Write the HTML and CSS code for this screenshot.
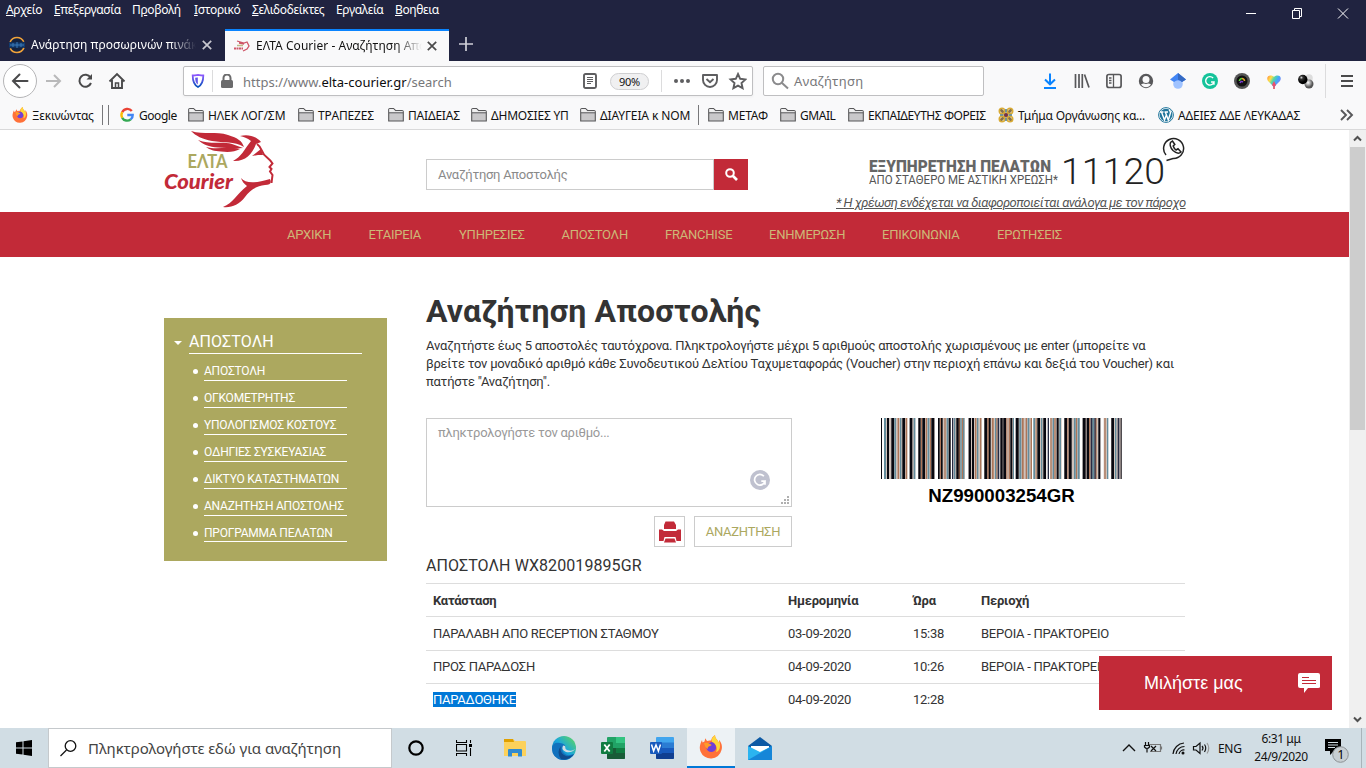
FILE: index.html
```html
<!DOCTYPE html>
<html lang="el">
<head>
<meta charset="utf-8">
<title>ΕΛΤΑ Courier - Αναζήτηση Αποστολής</title>
<link rel="stylesheet" href="styles.css">
</head>
<body>
<svg width="0" height="0" class="defs">
  <defs>
    <symbol id="folder" viewBox="0 0 16 16"><path d="M.7 14V2.7Q.7 1.500 1.900 1.500H5.500L7.500 3.500H14Q15.300 3.500 15.300 4.700V14Z" fill="#c9c8ca" stroke="#58585a" stroke-width="1.100"/><path d="M1.300 4.600V2.100H5.300L7.200 4.200H14.700V5.600H1.300Z" fill="#f0f0f0"/><path d="M1 5.800H15" stroke="#58585a"/></symbol>
    <symbol id="fox" viewBox="0 0 24 24">
      <path d="M3 5C1 9 0 13 1.500 16.500A11 11 0 0 0 22.500 15C23.800 10.500 22 7 20 5C20 6.500 20 7 20 8C18.500 4.500 16 3.500 16 0C13 1.800 12.500 4 12.200 5.600Q10 5.300 8 6L6.300 3.200L5.500 6.500L3.500 7.500Z" fill="#ff7139"/>
      <path d="M16 0C13 2 12 5 13 7C17 9 19 13 17 17C21 16 22 11 20 5L20 8C18.500 4.500 16 3.500 16 0Z" fill="#ffd83a"/>
      <path d="M1.200 11A11 11 0 0 0 22 17A11 11 0 0 1 1.200 11Z" fill="#f52b55"/>
      <path d="M7.500 12C8 9 9 8 11 8L12 7C15 7 17.500 10 17 13.500A5 5 0 0 1 7.500 13.500Z" fill="#7040d8"/>
      <path d="M5 8Q8 7 11 9Q14 10 11 11Q8 12 9 14Q6 13 5 8Z" fill="#ff9b28"/>
    </symbol>
    <symbol id="grammar" viewBox="0 0 20 20"><circle cx="10" cy="10" r="10" fill="currentColor"/><path d="M13.900 6.300A5.300 5.300 0 1 0 15 11.200H11.300M15 11.200V14.700" fill="none" stroke="#fff" stroke-width="1.700"/></symbol>
    <symbol id="cross" viewBox="0 0 10 10"><path d="M.8.8L9.200 9.200M9.200.8L.8 9.200" stroke="currentColor" stroke-width="1.700"/></symbol>
    <linearGradient id="shieldFill" x2="0" y2="1"><stop stop-color="#9059ff"/><stop offset="1" stop-color="#0250bb"/></linearGradient>
    <linearGradient id="edgeFill" x1="0" y1="1" x2="1" y2="0"><stop stop-color="#0c59a4"/><stop offset=".5" stop-color="#1ba7dc"/><stop offset="1" stop-color="#64db54"/></linearGradient>
    <linearGradient id="heartFill" x2="1" y2=".5"><stop stop-color="#ff8a3c"/><stop offset=".3" stop-color="#ffdf4b"/><stop offset=".5" stop-color="#55d8a4"/><stop offset=".75" stop-color="#42a7ff"/><stop offset="1" stop-color="#8c7ff1"/></linearGradient>
    <radialGradient id="blackBall" cx=".35" cy=".3"><stop stop-color="#ddd"/><stop offset=".35" stop-color="#333"/><stop offset="1"/></radialGradient>
    <radialGradient id="grayBall" cx=".4" cy=".35"><stop stop-color="#fff"/><stop offset="1" stop-color="#555"/></radialGradient>
  </defs>
</svg>

<header class="browser">
  <div class="titlebar">
    <nav class="menubar">
      <span class="m1"><u>Α</u>ρχείο</span><span class="m2"><u>Ε</u>πεξεργασία</span><span class="m3">Π<u>ρ</u>οβολή</span><span class="m4"><u>Ι</u>στορικό</span><span class="m5"><u>Σ</u>ελιδοδείκτες</span><span class="m6">Εργαλεία</span><span class="m7"><u>Β</u>οηθεια</span>
    </nav>
    <svg class="winctl" width="110" height="16" fill="none" stroke="#fff"><path d="M6 7.500H16M52.500 4.500H59.500V12.500H52.500ZM54.500 4.500V2.500H61.500V10.500H59.500M98 2.500L108 12.500M108 2.500L98 12.500"/></svg>
  </div>
  <div class="tabs">
    <div class="tab tab-old">
      <svg width="18" height="18" viewBox="0 0 18 18"><circle cx="9" cy="9" r="7.500" fill="#14223f" stroke="#f1a33a" stroke-width="1.600" stroke-dasharray="17 6.500" stroke-dashoffset="-3"/><path d="M1 6.500H17V11.500H1Z" fill="#123c70"/><path d="M2 9H16M5 7V11M9 6V12M13 7V11" stroke="#3a78b5"/></svg>
      <span class="tab-label">Ανάρτηση προσωρινών πινάκων</span>
      <svg class="close" width="10" height="10"><use href="#cross"/></svg>
    </div>
    <div class="tab tab-active">
      <svg width="16" height="12" viewBox="0 0 16 12" fill="none" stroke="#cf5668"><path d="M3 1L10 3L13 2L15 6L13 9L9 11M5 3L10 4" stroke-width="1.300"/><path d="M0 8.500H9" stroke-width="2.200" stroke-dasharray="2 .5"/><path d="M3 5.500H9" stroke="#bfb985" stroke-width="1.500"/></svg>
      <span class="tab-label">ΕΛΤΑ Courier - Αναζήτηση Αποστολής</span>
      <svg class="close" width="10" height="10"><use href="#cross"/></svg>
    </div>
    <svg class="plus" width="14" height="14"><path d="M7 0V14M0 7H14" stroke="#d0d0d8" stroke-width="1.700"/></svg>
  </div>
  <div class="toolbar">
    <div class="navbtns">
      <svg width="130" height="36" viewBox="0 0 130 36" fill="none" stroke="#4a4a4b" stroke-width="2">
        <circle cx="20" cy="18" r="16.500" fill="#fff" stroke="#b5b5b7" stroke-width="1"/>
        <path d="M13 18H27.500M19.500 11.500L13 18L19.500 24.500" stroke-linecap="round"/>
        <path d="M46 18H60M54 12L60 18L54 24" stroke="#b9b9ba"/>
        <path d="M90.500 14.500A6 6 0 1 0 91 20"/><path d="M92 11V16.500H86.500Z" fill="#4a4a4b" stroke="none"/>
        <path d="M109.500 18.500L117 11L124.500 18.500M112 17V25H122V17" stroke-width="1.900"/><path d="M115.500 25V20H118.500V25" stroke-width="1.500"/>
      </svg>
    </div>
    <div class="urlbar">
      <svg width="16" height="16" viewBox="0 0 16 16"><path d="M8 1.800C10 2.200 12 2.500 13.300 2.500C13.300 8 12.500 11.700 8 14C3.500 11.700 2.700 8 2.700 2.500C4 2.500 6 2.200 8 1.800Z" fill="none" stroke="url(#shieldFill)" stroke-width="1.800"/><path d="M7.800 4.500V11.500C5.700 10 5.200 7.700 5.200 4.800Z" fill="#6157e8"/></svg>
      <i class="vline"></i>
      <svg width="12" height="14" viewBox="0 0 12 14"><rect y="6" width="12" height="8" rx="1.500" fill="#6b6b6c"/><path d="M2.500 7V4A3.500 3.500 0 0 1 9.500 4V7" fill="none" stroke="#6b6b6c" stroke-width="2"/></svg>
      <span class="url">https://www.<b>elta-courier.gr</b>/search</span>
      <svg class="reader" width="14" height="16" fill="none" stroke="#5e5e60"><rect x="1" y="1" width="12" height="14" rx="1.500" stroke-width="1.900"/><path d="M4 4.500H10M4 6.500H10M4 8.500H10M4 10.500H8"/></svg>
      <span class="zoom">90%</span>
      <i class="vline v2"></i>
      <svg class="pageacts" width="76" height="18"><g fill="#5e5e60"><circle cx="5" cy="9" r="2"/><circle cx="11" cy="9" r="2"/><circle cx="17" cy="9" r="2"/></g><g fill="none" stroke="#5e5e60" stroke-width="1.900"><path d="M32 3H46V8A7 7 0 0 1 32 8Z" stroke-linejoin="round"/><path d="M35.500 7L39 10.300L42.500 7"/><path d="M67 2L69.200 6.800L74.400 7.400L70.500 11L71.600 16.200L67 13.600L62.400 16.200L63.500 11L59.600 7.400L64.800 6.800Z"/></g></svg>
    </div>
    <div class="searchbar"><svg width="18" height="18" fill="none" stroke="#8b8b8d" stroke-width="2"><circle cx="7" cy="7" r="5.200"/><path d="M11 11L17 16.500"/></svg><span>Αναζήτηση</span></div>
    <div class="tools">
      <svg viewBox="0 0 16 16" fill="none" stroke="#0a84ff" stroke-width="2"><path d="M8 .5V11M3 6.500L8 11.300L13 6.500M2 15H14"/></svg>
      <svg viewBox="0 0 16 16" fill="none" stroke="#58585a" stroke-width="1.700"><path d="M1.500 1V15M5 1V15M8.300 1V15M10.500 1.500L15 14.500"/></svg>
      <svg viewBox="0 0 16 16" fill="none" stroke="#58585a" stroke-width="1.700"><rect x=".9" y="1.500" width="14.200" height="13" rx="2"/><path d="M7.500 2V14M3 5H5.500M3 7.500H5.500M3 10H5.500" stroke-width="1.300"/></svg>
      <svg viewBox="0 0 16 16"><circle cx="8" cy="8" r="7.200" fill="#58585a"/><path d="M3 11.500A6 6 0 0 0 13 11.500Q10.500 9.700 8 11Q5.500 9.700 3 11.500Z" fill="#f9f9fa"/><circle cx="8" cy="6.500" r="3.500" fill="#f9f9fa"/></svg>
      <svg viewBox="0 0 16 16"><circle cx="8" cy="11" r="4.800" fill="#a0c3ff"/><path d="M8 0L0 6.500L4 9Q8 5.500 12 9L16 6.500Z" fill="#4285f4"/><path d="M8 0L16 6.500L12 9Q10.500 7 8 6.800Z" fill="#356ac3"/></svg>
      <svg viewBox="0 0 20 20" class="green"><use href="#grammar"/></svg>
      <svg viewBox="0 0 16 16"><circle cx="8" cy="8" r="8" fill="#555"/><circle cx="8" cy="8" r="5.500" fill="#111"/><path d="M5.500 8A2.500 2.500 0 0 1 8 5.500" stroke="#5dd33a" stroke-width="1.600" fill="none"/><path d="M8 5.500A2.500 2.500 0 0 1 10.500 8" stroke="#e4a62a" stroke-width="1.600" fill="none"/><path d="M6 10Q7 7.500 9 9" stroke="#7f3ed1" stroke-width="1.600" fill="none"/></svg>
      <svg viewBox="0 0 16 16"><path d="M8 11V16" stroke="#e33d4e" stroke-width="1.500"/><path d="M8 14.500L6 12L2 8C-.5 4 3.500.5 8 3.800C12.500.5 16.500 4 14 8L10 12Z" fill="url(#heartFill)"/><path d="M6 12L8 8L10 12L8 14.500Z" fill="#f0506a"/></svg>
      <svg viewBox="0 0 16 16"><circle cx="11" cy="5" r="3.800" fill="#ddd"/><circle cx="11" cy="11" r="4.500" fill="url(#grayBall)"/><circle cx="4.800" cy="6.500" r="4.700" fill="url(#blackBall)"/></svg>
    </div>
    <i class="toolsep"></i>
    <svg class="burger" width="12" height="14"><path d="M0 2H12M0 7H12M0 12H12" stroke="#4a4a4b" stroke-width="1.900"/></svg>
  </div>
  <div class="bookmarks">
    <span class="bm b1"><svg><use href="#fox"/></svg><em>Ξεκινώντας</em></span>
    <i class="bsep"></i><i class="bsep s2"></i>
    <span class="bm b2"><svg viewBox="0 0 16 16" fill="none" stroke-width="2.400"><path d="M12.800 4A5.700 5.700 0 0 0 3.200 5.200" stroke="#ea4335"/><path d="M3.200 5.200A5.700 5.700 0 0 0 3.200 10.800" stroke="#fbbc05"/><path d="M3.200 10.800A5.700 5.700 0 0 0 11.700 12.400" stroke="#34a853"/><path d="M11.700 12.400A5.500 5.500 0 0 0 13.700 8H8.300" stroke="#4285f4"/></svg><em>Google</em></span>
    <span class="bm b3"><svg><use href="#folder"/></svg><em>ΗΛΕΚ ΛΟΓ/ΣΜ</em></span>
    <span class="bm b4"><svg><use href="#folder"/></svg><em>ΤΡΑΠΕΖΕΣ</em></span>
    <span class="bm b5"><svg><use href="#folder"/></svg><em>ΠΑΙΔΕΙΑΣ</em></span>
    <span class="bm b6"><svg><use href="#folder"/></svg><em>ΔΗΜΟΣΙΕΣ ΥΠ</em></span>
    <span class="bm b7"><svg><use href="#folder"/></svg><em>ΔΙΑΥΓΕΙΑ κ ΝΟΜ</em></span>
    <i class="bsep s3"></i>
    <span class="bm b8"><svg><use href="#folder"/></svg><em>ΜΕΤΑΦ</em></span>
    <span class="bm b9"><svg><use href="#folder"/></svg><em>GMAIL</em></span>
    <span class="bm b10"><svg><use href="#folder"/></svg><em>ΕΚΠΑΙΔΕΥΤΗΣ ΦΟΡΕΙΣ</em></span>
    <span class="bm b11"><svg viewBox="0 0 16 16" fill="none"><path d="M2 2L14 14M14 2L2 14" stroke="#85704a" stroke-width="3"/><circle cx="4" cy="4" r="2.700" stroke="#d9ab35" stroke-width="1.600"/><circle cx="12" cy="4" r="2.700" stroke="#d9ab35" stroke-width="1.600"/><circle cx="4" cy="12" r="2.700" stroke="#d9ab35" stroke-width="1.600"/><circle cx="12" cy="12" r="2.700" stroke="#d9ab35" stroke-width="1.600"/><path d="M8 2V5M8 11V14M2 8H5M11 8H14" stroke="#4e7d8c" stroke-width="1.500"/><circle cx="8" cy="8" r="1.800" fill="#7a2f48"/></svg><em>Τμήμα Οργάνωσης κα...</em></span>
    <span class="bm b12"><svg viewBox="0 0 16 16"><circle cx="8" cy="8" r="7.400" fill="#fff" stroke="#21759b"/><circle cx="8" cy="8" r="6.300" fill="#21759b"/><path d="M2 5H5.500M6.500 5H10M3.500 5L6.500 13L8.500 7.500M7.300 5L10.300 13L12.500 6Q12.500 4 11 3" fill="none" stroke="#fff" stroke-width="1.400"/></svg><em>ΑΔΕΙΕΣ ΔΔΕ ΛΕΥΚΑΔΑΣ</em></span>
    <svg class="more" width="14" height="12" fill="none" stroke="#58585a" stroke-width="1.900"><path d="M1 1L6 6L1 11M7 1L12 6L7 11"/></svg>
  </div>
</header>

<div class="viewport">
  <div class="page">
    <div class="site-head">
      <svg class="logo" width="110" height="79" viewBox="0 0 110 79">
        <g fill="#c22a38">
          <path d="M27 1C40 5 52 1 64 5C74 8 78 11 80 17C70 11 60 13 48 11C38 9 32 6 27 1Z"/>
          <path d="M34 10C46 15 58 11 68 14L79 18C71 19 62 18 54 17.500C45 17 39 14.500 34 10Z"/>
          <path d="M42 17C53 20 62 16 76 19C71 22 64 22.500 57 21.500C50 21 46 20 42 17Z"/>
          <path d="M76 6C84 4 92 6 97 12L92 14C88 25 80 32 69 31C77 27 80 20 87 11C83 8 80 7 76 6Z"/>
          <path d="M88 26L97 19L99 25L94 25Z"/>
          <path d="M77 48C81 53 90 54 106 49C108 53 106 55 101 55C92 56 86 60 81 67C75 75 67 78 59 77C69 73 73 64 83 56C80 54 78 51 77 48Z"/>
        </g>
        <path d="M93 14C99 18 97 23 102 26.500C105 29 107 31 108.500 33.500L105.500 37L107.500 39L106 41.500L108.500 45L107.500 53" fill="none" stroke="#c22a38" stroke-width="2"/>
        <text class="logo-a" x="23.500" y="38" textLength="40" lengthAdjust="spacingAndGlyphs">ΕΛΤΑ</text>
        <text class="logo-b" x="0" y="58.500" textLength="69" lengthAdjust="spacingAndGlyphs">Courier</text>
      </svg>
      <form class="head-search"><span>Αναζήτηση Αποστολής</span><b><svg width="13" height="13" fill="none" stroke="#fff" stroke-width="2"><circle cx="5" cy="5" r="3.800"/><path d="M8 8L12 12" stroke-width="2.600"/></svg></b></form>
      <div class="support">
        <svg width="330" height="56" viewBox="0 0 330 56">
          <text class="su1" x="14" y="41.500" textLength="182" lengthAdjust="spacingAndGlyphs">ΕΞΥΠΗΡΕΤΗΣΗ ΠΕΛΑΤΩΝ</text>
          <text class="su2" x="14" y="54" textLength="189" lengthAdjust="spacingAndGlyphs">ΑΠΟ ΣΤΑΘΕΡΟ ΜΕ ΑΣΤΙΚΗ ΧΡΕΩΣΗ*</text>
          <text class="su3" x="206" y="54" textLength="104" lengthAdjust="spacingAndGlyphs">11120</text>
          <g fill="none" stroke="#222" stroke-width="1.500"><path d="M311 25A10 10 0 1 1 318 28.500L311.500 30.500"/><path d="M315.500 12.500Q314 16 318 20.500Q323 25 326 22L323 18.800L321 20Q319 18.500 318.200 16L319.800 14.500L317.500 11Z"/></g>
        </svg>
        <a>* Η χρέωση ενδέχεται να διαφοροποιείται ανάλογα με τον πάροχο</a>
      </div>
    </div>
    <nav class="site-nav"><span class="n1">ΑΡΧΙΚΗ</span><span class="n2">ΕΤΑΙΡΕΙΑ</span><span class="n3">ΥΠΗΡΕΣΙΕΣ</span><span class="n4">ΑΠΟΣΤΟΛΗ</span><span class="n5">FRANCHISE</span><span class="n6">ΕΝΗΜΕΡΩΣΗ</span><span class="n7">ΕΠΙΚΟΙΝΩΝΙΑ</span><span class="n8">ΕΡΩΤΗΣΕΙΣ</span></nav>
    <div class="columns">
      <aside class="side">
        <h4>ΑΠΟΣΤΟΛΗ</h4>
        <ul><li>ΑΠΟΣΤΟΛΗ</li><li>ΟΓΚΟΜΕΤΡΗΤΗΣ</li><li>ΥΠΟΛΟΓΙΣΜΟΣ ΚΟΣΤΟΥΣ</li><li>ΟΔΗΓΙΕΣ ΣΥΣΚΕΥΑΣΙΑΣ</li><li>ΔΙΚΤΥΟ ΚΑΤΑΣΤΗΜΑΤΩΝ</li><li>ΑΝΑΖΗΤΗΣΗ ΑΠΟΣΤΟΛΗΣ</li><li>ΠΡΟΓΡΑΜΜΑ ΠΕΛΑΤΩΝ</li></ul>
      </aside>
      <main class="main">
        <h1>Αναζήτηση Αποστολής</h1>
        <p>Αναζητήστε έως 5 αποστολές ταυτόχρονα. Πληκτρολογήστε μέχρι 5 αριθμούς αποστολής χωρισμένους με enter (μπορείτε να<br>βρείτε τον μοναδικό αριθμό κάθε Συνοδευτικού Δελτίου Ταχυμεταφοράς (Voucher) στην περιοχή επάνω και δεξιά του Voucher) και<br>πατήστε "Αναζήτηση".</p>
        <div class="lookup">
          <div class="entry">
            <div class="area"><span>πληκτρολογήστε τον αριθμό...</span>
              <svg class="gbadge" width="20" height="20"><use href="#grammar"/></svg>
              <svg class="grip" width="8" height="8" fill="#b0b0b0"><path d="M6 0H8V2H6ZM3 3H5V5H3ZM6 3H8V5H6ZM0 6H2V8H0ZM3 6H5V8H3ZM6 6H8V8H6Z"/></svg>
            </div>
            <div class="buttons">
              <span class="btn print"><svg width="22" height="22" fill="#c22a38"><path d="M6.500 .5H15L17 4V8H5V4ZM0 8.500H3L5 10H17L19 8.500H22V20H17.500L16.500 16H5.500L4.500 20H0ZM6.500 17.500H15.500L17 21.500H5Z"/></svg></span>
              <span class="btn find">ΑΝΑΖΗΤΗΣΗ</span>
            </div>
          </div>
          <div class="voucher">
            <svg width="241" height="61" viewBox="0 0 723 183" preserveAspectRatio="none">
              <path fill="#cfc2bb" d="M9 0h68v183h-68zM86 0h17v183h-17zM112 0h49v183h-49zM171 0h38v183h-38zM218 0h34v183h-34zM262 0h40v183h-40zM310 0h43v183h-43zM358 0h40v183h-40zM406 0h46v183h-46zM458 0h38v183h-38zM508 0h34v183h-34zM550 0h46v183h-46zM605 0h53v183h-53zM668 0h12v183h-12zM690 0h32v183h-32z"/>
              <path fill="#080810" d="M0 0h3v183h-3zM18 0h6v183h-6zM31 0h8v183h-8zM64 0h8v183h-8zM86 0h8v183h-8zM112 0h7v183h-7zM124 0h8v183h-8zM151 0h9v183h-9zM171 0h5v183h-5zM180 0h5v183h-5zM203 0h6v183h-6zM226 0h11v183h-11zM263 0h7v183h-7zM273 0h6v183h-6zM310 0h9v183h-9zM322 0h7v183h-7zM358 0h7v183h-7zM367 0h8v183h-8zM388 0h6v183h-6zM404 0h9v183h-9zM469 0h8v183h-8zM487 0h8v183h-8zM527 0h6v183h-6zM550 0h8v183h-8zM563 0h9v183h-9zM605 0h9v183h-9zM617 0h7v183h-7zM652 0h6v183h-6zM691 0h8v183h-8zM719 0h3v183h-3z"/>
              <path fill="#638c9c" d="M9 0h6v183h-6zM40 0h5v183h-5zM57 0h4v183h-4zM98 0h5v183h-5zM140 0h5v183h-5zM197 0h5v183h-5zM219 0h4v183h-4zM238 0h4v183h-4zM246 0h4v183h-4zM288 0h4v183h-4zM342 0h4v183h-4zM396 0h3v183h-3zM415 0h6v183h-6zM440 0h5v183h-5zM457 0h5v183h-5zM480 0h4v183h-4zM515 0h4v183h-4zM535 0h5v183h-5zM579 0h5v183h-5zM590 0h6v183h-6zM634 0h5v183h-5zM678 0h4v183h-4zM702 0h4v183h-4z"/>
              <path fill="#ac7558" d="M50 0h4v183h-4zM74 0h5v183h-5zM120 0h3v183h-3zM134 0h4v183h-4zM147 0h3v183h-3zM177 0h3v183h-3zM190 0h4v183h-4zM233 0h3v183h-3zM243 0h3v183h-3zM282 0h4v183h-4zM297 0h4v183h-4zM319 0h4v183h-4zM333 0h5v183h-5zM346 0h3v183h-3zM376 0h3v183h-3zM383 0h4v183h-4zM423 0h5v183h-5zM434 0h4v183h-4zM449 0h4v183h-4zM464 0h3v183h-3zM508 0h4v183h-4zM520 0h4v183h-4zM559 0h3v183h-3zM585 0h3v183h-3zM624 0h4v183h-4zM642 0h5v183h-5zM670 0h4v183h-4z"/>
              <path fill="#262b43" d="M213 0h4v183h-4zM350 0h5v183h-5zM500 0h4v183h-4zM629 0h5v183h-5zM640 0h4v183h-4zM710 0h5v183h-5z"/>
            </svg>
            <b>NZ990003254GR</b>
          </div>
        </div>
        <h2>ΑΠΟΣΤΟΛΗ WX820019895GR</h2>
        <div class="grid">
          <b>Κατάσταση</b><b>Ημερομηνία</b><b>Ώρα</b><b>Περιοχή</b>
          <span>ΠΑΡΑΛΑΒΗ ΑΠΟ RECEPTION ΣΤΑΘΜΟΥ</span><span>03-09-2020</span><span>15:38</span><span>ΒΕΡΟΙΑ - ΠΡΑΚΤΟΡΕΙΟ</span>
          <span class="up">ΠΡΟΣ ΠΑΡΑΔΟΣΗ</span><span class="up">04-09-2020</span><span class="up">10:26</span><span class="up">ΒΕΡΟΙΑ - ΠΡΑΚΤΟΡΕΙΟ</span>
          <span class="up"><mark>ΠΑΡΑΔΟΘΗΚΕ</mark></span><span class="up">04-09-2020</span><span class="up">12:28</span><span class="up"></span>
        </div>
      </main>
    </div>
    <div class="chat"><span>Μιλήστε μας</span><svg width="22" height="20"><path d="M2 0H20Q22 0 22 2V14Q22 15 20 15H10L6 20V15H2Q0 15 0 13V2Q0 0 2 0Z" fill="#fff"/><path d="M4 4.500H11M4 7.500H18M4 10.500H18" stroke="#c22a38"/></svg></div>
  </div>
  <div class="scroll">
    <svg width="17" height="17" fill="none" stroke="#505050" stroke-width="2"><path d="M5 10.500L8.500 7L12 10.500"/></svg>
    <div class="thumb"></div>
    <svg width="17" height="17" fill="none" stroke="#505050" stroke-width="2"><path d="M5 6.500L8.500 10L12 6.500"/></svg>
  </div>
</div>

<footer class="taskbar">
  <div class="start"><svg width="16" height="16"><path d="M0 2.300L6.500 1.400V7.500H0ZM7.500 1.300L16 0V7.500H7.500ZM0 8.500H6.500V14.600L0 13.700ZM7.500 8.500H16V16L7.500 14.700Z"/></svg></div>
  <div class="tasksearch"><svg width="17" height="17" fill="none" stroke="#111" stroke-width="1.300"><circle cx="10.500" cy="6" r="5.300"/><path d="M6.500 10L.5 16"/></svg><span>Πληκτρολογήστε εδώ για αναζήτηση</span></div>
  <div class="apps">
    <span><svg width="16" height="16"><circle cx="8" cy="8" r="6.700" fill="none" stroke="#000" stroke-width="2.200"/></svg></span>
    <span class="tv"><svg width="16" height="16" fill="none" stroke="#000" stroke-width="1.100"><path d="M.5 0V2.500H10.500V0M.5 16V13.500H10.500V16M.5 4.500H10.500V11H.5ZM14.500 0V3M14.500 8V16"/><path d="M13 4H16V7H13Z" fill="#000" stroke="none"/></svg></span>
    <span class="shift"><svg width="22" height="20"><path d="M0 2Q0 1 1 1H9L11 3H21Q22 3 22 4V18H0Z" fill="#fcd15b"/><path d="M0 1H9L10 4H0Z" fill="#e0a000"/><path d="M4 18.500V12Q4 11 5 11H17Q18 11 18 12V18.500H14V15H8V18.500Z" fill="#318bd0"/></svg></span>
    <span><svg width="24" height="24"><circle cx="12" cy="12" r="12" fill="url(#edgeFill)"/><path d="M0 12Q1 6 8 7Q14 8 13 11Q9 11 11 16Q14 21 22 18Q17 25 10 24Q0 22 0 12Z" fill="#1271bd"/><path d="M9 10Q7 17 14 20Q18 21 22 18Q17 25 9 23Q4 16 9 10Z" fill="#104b8c"/><path d="M11 9.500Q9 14 14 16Q20 17 23 13Q20 16 15 14Q13 13 13 10Z" fill="#d0dde4"/></svg></span>
    <span><svg width="24" height="22"><rect x="6" width="18" height="22" rx="1" fill="#21a366"/><path d="M15 0H24V6H15Z" fill="#33c481"/><path d="M6 11H24V21Q24 22 23 22H7Q6 22 6 21Z" fill="#185c37"/><path d="M15 11H24V16H15Z" fill="#107c41"/><rect y="5" width="12" height="12" rx="1" fill="#107c41"/><path d="M3.300 7.500L8.700 14.500M8.700 7.500L3.300 14.500" stroke="#fff" stroke-width="1.800"/></svg></span>
    <span><svg width="24" height="22"><rect x="6" width="18" height="22" rx="1" fill="#41a5ee"/><path d="M6 5.500H24V11H6Z" fill="#2b7cd3"/><path d="M6 11H24V16H6Z" fill="#185abd"/><path d="M6 16H24V21Q24 22 23 22H7Q6 22 6 21Z" fill="#103f91"/><rect y="5" width="12" height="12" rx="1" fill="#185abd"/><path d="M1.500 7.500L3.600 14L6 8L8.400 14L10.500 7.500" fill="none" stroke="#fff" stroke-width="1.500"/></svg></span>
    <span class="on"><svg width="24" height="24"><use href="#fox"/></svg></span>
    <span><svg width="24" height="23"><path d="M0 9L12 0L24 9V22Q24 23 23 23H1Q0 23 0 22Z" fill="#0c59a4"/><path d="M3 9H21V15H3Z" fill="#fff"/><path d="M0 9L12 15L24 9V23H0Z" fill="#2bb4f0"/><path d="M24 9L0 23H24Z" fill="#1686d8"/></svg></span>
  </div>
  <div class="tray">
    <svg width="96" height="20" fill="none" stroke="#111" stroke-width="1.200"><path d="M1 13L7 7L13 13" stroke-width="1.400"/><path d="M26 6.500H38.500V13.500H28M39.500 8.500V11.500" stroke="#777"/><path d="M29 8L34 13M34 8L29 13"/><path d="M23.500 4V7M26.500 4V7M22.500 7.500H27.500V9Q25 12 22.500 9ZM25 11V14.500"/><path d="M51 16A12 12 0 0 1 62 5M54 16A8.500 8.500 0 0 1 62.500 8.500M57 16A5 5 0 0 1 62.500 12"/><circle cx="61" cy="15" r="1.500" fill="#111" stroke="none"/><path d="M71.500 8.500H74L78 5V15.500L74 12H71.500Z"/><path d="M80 8Q82 10 80 12.500M82.500 6.500Q85 10 82.500 14"/><path d="M85 5Q88.500 10 85 15.500" stroke="#999"/></svg>
    <span class="lang">ENG</span>
    <span class="clock">6:31 μμ<br>24/9/2020</span>
    <svg class="notif" width="26" height="26"><path d="M1 1H17V13H10L6 17V13H1Z"/><path d="M4 4.500H14M4 7H14M4 9.500H11" stroke="#d2dee4" stroke-width="1"/><circle cx="16.500" cy="16.500" r="7.800" fill="#c7ced2" stroke="#8d9295"/><text x="13.500" y="21">1</text></svg>
    <i></i>
  </div>
</footer>
</body>
</html>
```
FILE: styles.css
```css
* { box-sizing: border-box; }
body { margin: 0; width: 1366px; height: 768px; overflow: hidden; display: flex; flex-direction: column; background: #fff; font: 12px "Noto Sans", "Open Sans", sans-serif; color: #111; }
svg { display: block; flex: none; }
.defs { position: absolute; }
span { white-space: nowrap; }

/* browser chrome */
.titlebar { height: 29px; background: #202340; display: flex; justify-content: space-between; color: #fff; }
.menubar { display: flex; padding-left: 6px; line-height: 20px; letter-spacing: -.35px; }
.menubar span { flex: none; }
.m1 { width: 48px; } .m2 { width: 78px; } .m3 { width: 62px; } .m4 { width: 58px; } .m5 { width: 84px; } .m6 { width: 59px; }
.menubar u { text-underline-offset: 1px; }
.winctl { margin: 6px 16px 0 0; }
.tabs { height: 32px; background: #202340; display: flex; color: #fff; }
.tab { display: flex; align-items: center; }
.tab-label { overflow: hidden; line-height: 20px; -webkit-mask-image: linear-gradient(90deg, #000 84%, transparent); mask-image: linear-gradient(90deg, #000 84%, transparent); }
.tab-old { width: 225px; padding-left: 8px; }
.tab-old .tab-label { width: 165px; margin: 0 6px 0 5px; letter-spacing: .04px; }
.tab-old .close { color: #c8c8d0; }
.tab-active { width: 224px; background: #f9f9fa; border-top: 2px solid #0a84ff; padding-left: 9px; color: #111; }
.tab-active .tab-label { width: 166px; margin: 0 5px 0 6px; letter-spacing: .04px; }
.tab-active .close { color: #4a4a4b; }
.plus { margin: 8px 0 0 10px; }
.toolbar { height: 40px; background: #f9f9fa; display: flex; align-items: center; }
.navbtns { width: 183px; }
.urlbar { width: 570px; height: 30px; border: 1px solid #bfbfc1; border-radius: 2px; background: #fff; display: flex; align-items: center; padding-left: 6px; box-shadow: 0 1px 3px #0000000d; }
.vline { width: 1px; height: 22px; background: #dcdcdd; margin: 0 8px 0 6px; }
.url { width: 340px; margin-left: 10px; padding-top: 1px; color: #77777a; font-size: 13px; letter-spacing: 0; }
.url b { font-weight: 400; color: #0c0c0d; }
.zoom { width: 39px; height: 17px; border: 1px solid #cfcfd1; border-radius: 9px; background: #f0f0f1; margin-left: 13px; text-align: center; line-height: 16px; font-size: 11px; letter-spacing: -.3px; }
.v2 { margin: 0 9px 0 12px; }
.searchbar { width: 221px; height: 30px; border: 1px solid #bfbfc1; border-radius: 2px; background: #fff; margin-left: 10px; display: flex; align-items: center; padding-left: 7px; gap: 5px; color: #77777a; font-size: 13px; letter-spacing: .3px; }
.tools { display: flex; gap: 16px; margin-left: 58px; }
.tools svg { width: 16px; height: 16px; }
.green { color: #15c39a; }
.toolsep { width: 1px; height: 34px; background: #dcdcdd; margin: 0 15px 0 11px; }
.bookmarks { height: 29px; background: #f9f9fa; border-bottom: 1px solid #d9d9da; display: flex; align-items: center; padding-left: 12px; }
.bm { display: flex; align-items: center; gap: 4px; flex: none; }
.bm svg { width: 16px; height: 16px; }
.bm em { font-style: normal; letter-spacing: -.2px; line-height: 16px; padding-top: 1px; }
.bm.b3 em { letter-spacing: -.05px; }
.bm.b7 em { letter-spacing: -.12px; }
.bm.b2 em, .bm.b9 em, .bm.b10 em { letter-spacing: -.45px; }
.b1 { width: 90px; } .b2 { width: 69px; } .b3 { width: 110px; } .b4 { width: 90px; } .b5 { width: 83px; } .b6 { width: 109px; } .b7 { width: 118px; } .b8 { width: 72px; } .b9 { width: 68px; } .b10 { width: 150px; } .b11 { width: 160px; } .b12 { width: 182px; }
.bsep { width: 1px; height: 20px; background: #77777a; }
.s2 { margin: 0 10px 0 5px; }
.s3 { margin-right: 9px; }

/* site */
.viewport { height: 598px; display: flex; overflow: hidden; }
.page { width: 1349px; position: relative; font-family: Roboto, sans-serif; font-size: 13px; color: #333; }
.site-head { height: 82px; padding-left: 164px; display: flex; }
.logo { width: 110px; }
.logo-a { font: 700 18px Lato, sans-serif; fill: #aca85f; }
.logo-b { font: italic 900 20.5px Lato, sans-serif; fill: #c22a38; }
.head-search { margin: 29px 0 0 152px; width: 322px; height: 31px; display: flex; }
.head-search span { flex: 1; border: 1px solid #ccc; padding-left: 11px; line-height: 29px; color: #8a8a8a; letter-spacing: -.27px; }
.head-search b { width: 34px; background: #c22a38; display: grid; place-items: center; }
.support { margin-left: 88px; width: 350px; padding-left: 19px; }
.support a { display: block; margin: 9px 0 0 -19px; font-style: italic; line-height: 16px; letter-spacing: -.51px; text-decoration: underline; white-space: nowrap; color: #555; }
.su1 { font: 900 16px Roboto, sans-serif; fill: #666; }
.su2 { font: 12px Roboto, sans-serif; fill: #555; }
.su3 { font: 300 37px Roboto, sans-serif; fill: #222; }
.site-nav { height: 45px; background: #c22a38; color: #cdb877; display: flex; padding-left: 287px; line-height: 45px; letter-spacing: -.22px; }
.n1 { width: 81.500px; } .n2 { width: 90.500px; } .n3 { width: 102.500px; } .n4 { width: 103.500px; } .n5 { width: 104px; } .n6 { width: 113px; } .n7 { width: 115px; }
.columns { display: flex; align-items: flex-start; padding-left: 164px; gap: 39px; }
.side { width: 223px; height: 243px; margin-top: 61px; background: #aca85f; color: #fff; padding: 12px 25px 0; }
.side h4 { margin: 0; width: 173px; height: 24px; border-bottom: 1px solid #fff; font-size: 16px; font-weight: 400; line-height: 23px; letter-spacing: .1px; }
.side h4::before { content: ""; float: left; margin: 11px 0 0 -15px; border: 4px solid transparent; border-top-color: #fff; border-bottom: 0; }
.side ul { list-style: none; margin: 8px 0 0 15px; padding: 0; }
.side li { width: 143px; height: 19px; border-bottom: 1px solid #fff; margin-bottom: 8px; line-height: 18px; font-size: 12px; white-space: nowrap; letter-spacing: -.22px; }
.side li:last-child { height: 18px; }
.side li::before { content: ""; float: left; width: 5px; height: 5px; border-radius: 50%; background: #fff; margin: 7px 0 0 -11px; }
.main { width: 759px; padding-top: 35px; }
h1 { margin: 0; font-size: 32px; line-height: 38px; font-weight: 700; letter-spacing: .15px; }
.main p { margin: 7px 0 0; line-height: 18px; white-space: nowrap; letter-spacing: -.24px; }
.lookup { display: flex; margin-top: 27px; }
.entry { width: 366px; }
.area { position: relative; height: 89px; border: 1px solid #ccc; padding: 5px 11px; line-height: 17px; color: #999; letter-spacing: -.26px; }
.gbadge { position: absolute; right: 21px; bottom: 16px; color: #bfc1cf; }
.grip { position: absolute; right: 2px; bottom: 2px; }
.buttons { display: flex; justify-content: flex-end; gap: 9px; margin-top: 9px; }
.btn { height: 31px; border: 1px solid #ccc; display: grid; place-items: center; color: #aca85f; letter-spacing: -.3px; }
.print { width: 31px; } .find { width: 98px; }
.voucher { margin-left: 89px; width: 241px; text-align: center; }
.voucher b { display: block; font: 700 18.700px/24px "Liberation Sans", sans-serif; color: #000; margin-top: 5px; }
h2 { margin: 9px 0 0; font-size: 16px; line-height: 20px; font-weight: 400; letter-spacing: .08px; }
.grid { margin-top: 7px; display: grid; grid-template-columns: 355px 125px 68px 211px; grid-template-rows: 33px 34px 33px 33px; letter-spacing: -.25px; }
.grid > * { border-top: 1px solid #ddd; padding: 8px 7px 0; line-height: 18px; }
.grid > .up { padding-top: 7px; }
mark { background: #0078d7; color: #fff; }
.chat { position: absolute; left: 1099px; top: 526px; width: 233px; height: 54px; background: #c22a38; color: #fff; display: flex; align-items: center; justify-content: space-between; padding: 0 12px 0 45px; font: 18px "Liberation Sans", sans-serif; }
.scroll { width: 17px; background: #f0f0f0; display: flex; flex-direction: column; }
.thumb { height: 283px; background: #cdcdcd; margin-bottom: auto; width: 15px; margin-left: 1px; }

/* taskbar */
.taskbar { height: 40px; background: #d1dde4; display: flex; }
.start { width: 48px; display: grid; place-items: center; }
.tasksearch { width: 344px; border: 1px solid #c5c9cc; background: #fff; display: flex; align-items: center; gap: 11px; padding-left: 11px; font-size: 15px; letter-spacing: -.08px; color: #444; }
.apps { display: flex; gap: 1px; }
.apps span { width: 48px; display: grid; place-items: center; }
.apps .tv { margin-left: -1px; }
.apps .shift { margin-left: 2px; }
.apps .on { background: #edf2f5; border-bottom: 2px solid #0078d7; }
.tray { margin-left: auto; display: flex; align-items: center; }
.lang { width: 33px; letter-spacing: -.3px; }
.clock { width: 62px; text-align: center; line-height: 18px; letter-spacing: -.4px; margin-left: -1px; }
.notif { margin: 6px 11px 0 12px; }
.notif text { font: 12px "Noto Sans", sans-serif; }
.tray i { width: 1px; height: 40px; background: #a9b4ba; margin-right: 4px; }
```
